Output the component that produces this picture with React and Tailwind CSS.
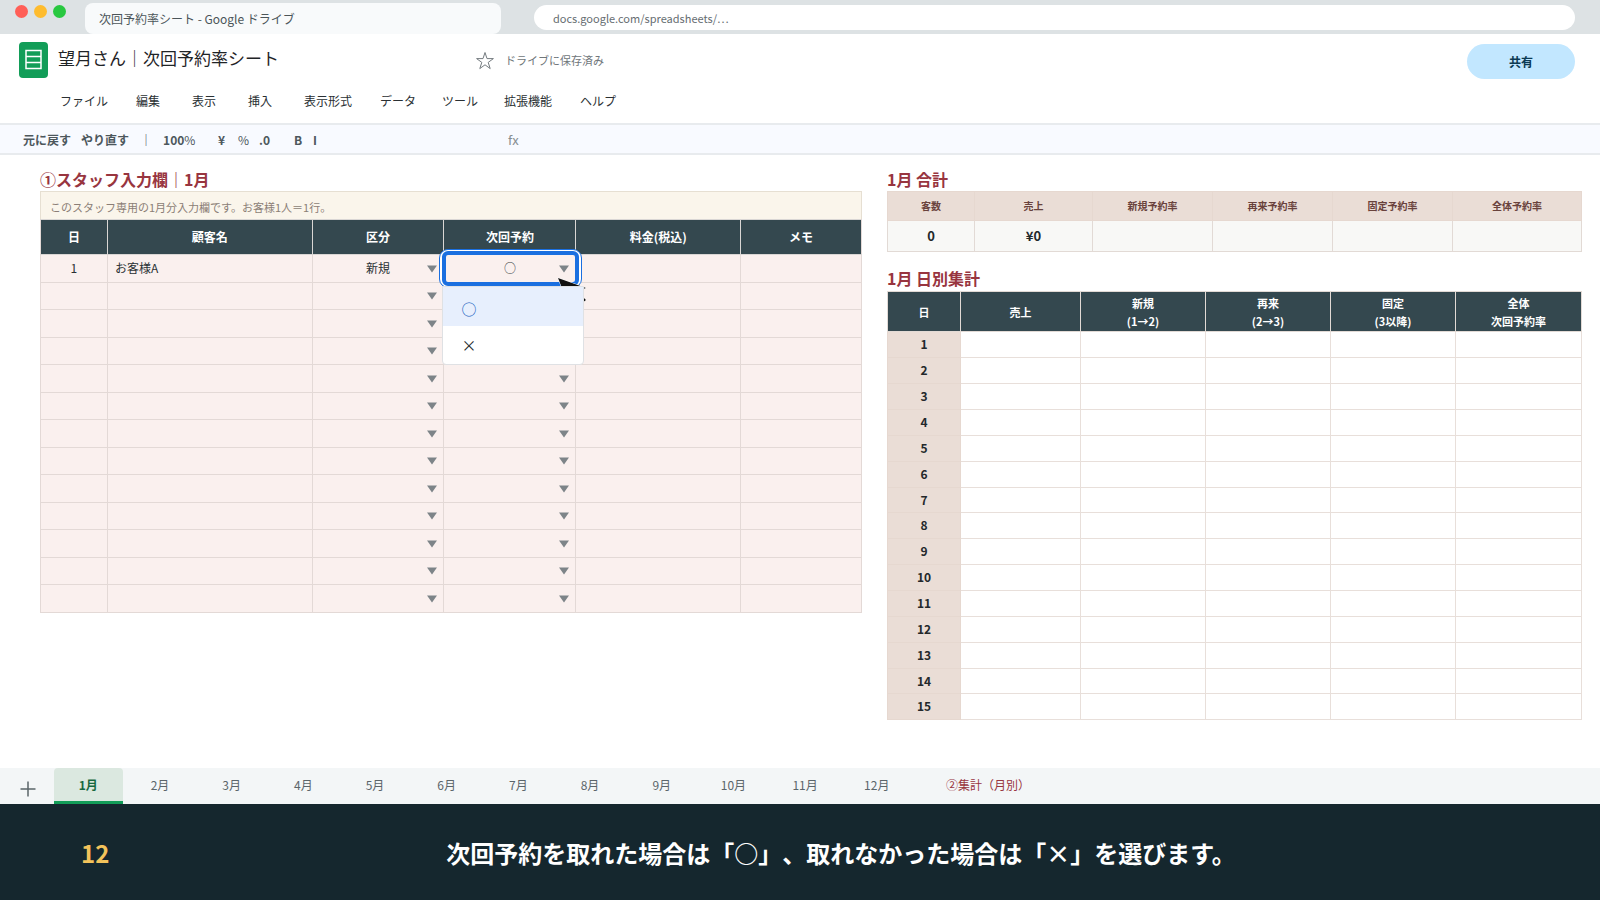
import React, { useState } from "react";

const menuItems = [
  { label: "ファイル", width: "w-[76px]" },
  { label: "編集", width: "w-14" },
  { label: "表示", width: "w-14" },
  { label: "挿入", width: "w-14" },
  { label: "表示形式", width: "w-[76px]" },
  { label: "データ", width: "w-[62px]" },
  { label: "ツール", width: "w-[62px]" },
  { label: "拡張機能", width: "w-[76px]" },
  { label: "ヘルプ", width: "w-14" },
];

const inputColumns = [
  { label: "日", size: 67 },
  { label: "顧客名", size: 205 },
  { label: "区分", size: 132 },
  { label: "次回予約", size: 132 },
  { label: "料金(税込)", size: 165 },
  { label: "メモ", size: 121 },
];

const totalColumns = [
  { label: "客数", value: "0", size: 87 },
  { label: "売上", value: "¥0", size: 118 },
  { label: "新規予約率", value: "", size: 120 },
  { label: "再来予約率", value: "", size: 120 },
  { label: "固定予約率", value: "", size: 120 },
  { label: "全体予約率", value: "", size: 129 },
];

const dailyColumns = [
  { label: "日", size: 73 },
  { label: "売上", size: 120 },
  { label: "新規", sub: "(1→2)", size: 125 },
  { label: "再来", sub: "(2→3)", size: 125 },
  { label: "固定", sub: "(3以降)", size: 125 },
  { label: "全体", sub: "次回予約率", size: 126 },
];

const inputRows = Array.from({ length: 13 }, (_, i) => i);
const days = Array.from({ length: 15 }, (_, i) => i + 1);
const months = Array.from({ length: 12 }, (_, i) => `${i + 1}月`);

function Columns({ columns }) {
  const total = columns.reduce((sum, column) => sum + column.size, 0);
  return (
    <colgroup>
      {columns.map((column) => (
        <col
          key={column.label}
          style={{ width: `${(column.size / total) * 100}%` }}
        />
      ))}
    </colgroup>
  );
}

function DropdownArrow({ label }) {
  return (
    <button
      type="button"
      aria-label={label}
      className="absolute inset-y-0 right-[6px] flex items-center"
    >
      <svg width="10" height="8" viewBox="0 0 10 8" fill="#7d8488">
        <path d="M0 0.5H10L5 7.5Z" />
      </svg>
    </button>
  );
}

function BrowserBar() {
  return (
    <div className="flex h-[34px] bg-[#dde2e4]">
      <div className="flex w-[85px] gap-[6px] pt-[5px] pl-[15px]">
        <span className="h-[13px] w-[13px] rounded-full bg-[#ff5f57]" />
        <span className="h-[13px] w-[13px] rounded-full bg-[#febc2e]" />
        <span className="h-[13px] w-[13px] rounded-full bg-[#28c840]" />
      </div>
      <div className="mt-[3px] flex w-[416px] items-center rounded-lg bg-[#f8fafb] px-[14px] text-xs text-[#4b5559]">
        次回予約率シート - Google ドライブ
      </div>
      <input
        type="text"
        aria-label="アドレス"
        defaultValue="docs.google.com/spreadsheets/…"
        className="mt-[5px] mr-[25px] ml-[33px] h-[25px] flex-1 rounded-full bg-white px-[19px] text-[11px] text-[#666d71]"
      />
    </div>
  );
}

function Header() {
  return (
    <header className="h-[89px]">
      <div className="flex h-[50px] items-start">
        <svg
          className="mt-2 ml-[19px]"
          width="29"
          height="36"
          viewBox="0 0 29 36"
          fill="none"
        >
          <rect width="29" height="36" rx="4" fill="#129d58" />
          <path
            d="M7 8.5H22V26.5H7ZM7 14.5H22M7 20.5H22"
            stroke="#fff"
            strokeWidth="1.5"
          />
        </svg>
        <h1 className="mt-[11px] ml-[10px] w-[417px] text-[17px] leading-[26px] text-[#1f2427]">
          望月さん｜次回予約率シート
        </h1>
        <button type="button" aria-label="スターを付ける" className="mt-[17px]">
          <svg
            width="20"
            height="20"
            viewBox="0 0 20 20"
            fill="none"
            stroke="#747b7f"
            strokeWidth="1"
          >
            <path d="M10 1.5L12 7.6H18.4L13.2 11.4L15.2 17.6L10 13.8L4.8 17.6L6.8 11.4L1.6 7.6H8Z" />
          </svg>
        </button>
        <span className="mt-[18px] ml-[10px] text-[11px] leading-4 text-[#6f767a]">
          ドライブに保存済み
        </span>
        <button
          type="button"
          className="mt-[10px] mr-[25px] ml-auto h-[35px] w-[108px] rounded-full bg-[#c2e7ff] text-xs font-bold text-[#0b3a53]"
        >
          共有
        </button>
      </div>
      <nav className="flex pt-[9px] pl-[60px] text-xs leading-4 text-[#2a3033]">
        {menuItems.map((item) => (
          <button
            key={item.label}
            type="button"
            className={`${item.width} text-left`}
          >
            {item.label}
          </button>
        ))}
      </nav>
    </header>
  );
}

function Toolbar() {
  return (
    <div className="flex h-8 items-center border-y-2 border-[#e8ebee] bg-[#f8faff] pt-[2px] pl-[23px] text-xs font-bold text-[#4d575c]">
      <button type="button">元に戻す</button>
      <button type="button" className="ml-[10px]">
        やり直す
      </button>
      <span className="mx-[11px]">｜</span>
      <button type="button" className="w-[55px] text-left">
        100<span className="font-normal">%</span>
      </button>
      <button type="button" className="w-5 text-left">
        ¥
      </button>
      <button type="button" className="w-[21px] text-left font-normal">
        %
      </button>
      <button type="button" className="w-[35px] text-left">
        .0
      </button>
      <button type="button" className="w-[19px] text-left">
        B
      </button>
      <button type="button" className="w-[195px] text-left">
        I
      </button>
      <span className="text-[13px] font-normal text-[#878e92]">fx</span>
    </div>
  );
}

function ReservationPicker({ value, onSelect }) {
  return (
    <>
      <div className="pointer-events-none absolute -top-[6px] -right-[7px] -bottom-[6px] -left-[5px] rounded-[9px] border border-[#1a6fe0] bg-white" />
      <div className="pointer-events-none absolute -top-[4px] -right-[4px] -bottom-[4px] -left-[2px] rounded-md border-4 border-[#1a6fe0] bg-[#faf0ee]" />
      <span className="relative text-[#363c3f]">{value}</span>
      <DropdownArrow label="次回予約を選択" />
      {/* Mouse pointer, partly under the open list */}
      <svg
        className="absolute top-[22px] left-[113px] z-10"
        width="32"
        height="30"
        viewBox="0 0 32 30"
        fill="#111"
        stroke="#fff"
        strokeWidth="1"
        paintOrder="stroke"
      >
        <path d="M1 1L29 11L20 14L29 23L25 26L16 17L11 26Z" />
      </svg>
      <div
        role="listbox"
        aria-label="次回予約"
        className="absolute top-[31px] -left-[2px] z-20 w-[142px] overflow-hidden rounded-b border border-[#dfe1e4] bg-white text-left text-[15px]"
      >
        <button
          type="button"
          role="option"
          aria-selected={value === "○"}
          onClick={() => onSelect("○")}
          className="block h-[39px] w-full bg-[#e7effd] pt-1 pl-[18px] text-left text-[#1a5fc0]"
        >
          ○
        </button>
        <button
          type="button"
          role="option"
          aria-selected={value === "×"}
          onClick={() => onSelect("×")}
          className="block h-[38px] w-full pl-[18px] text-left text-[#23282b]"
        >
          ×
        </button>
      </div>
    </>
  );
}

function StaffInput() {
  const [reservation, setReservation] = useState("○");

  return (
    <section>
      <h2 className="text-base leading-[23px] font-bold text-[#98353f]">
        ①スタッフ入力欄｜1月
      </h2>
      <p className="h-7 border border-b-0 border-[#e6dfd2] bg-[#faf5eb] pl-[9px] text-[11px] leading-[30px] text-[#8b7e76]">
        このスタッフ専用の1月分入力欄です。お客様1人＝1行。
      </p>
      <table className="w-full table-fixed border-collapse text-center text-xs text-[#2a3033]">
        <Columns columns={inputColumns} />
        <thead>
          <tr className="h-[35px] bg-[#34484f] text-white">
            {inputColumns.map((column) => (
              <th
                key={column.label}
                className="border border-[#d9d6d4] px-0 pt-0 pb-px font-bold first:border-l-[#e3d9d6] last:border-r-[#e3d9d6]"
              >
                {column.label}
              </th>
            ))}
          </tr>
        </thead>
        <tbody>
          {inputRows.map((row) => (
            <tr
              key={row}
              className="h-7 bg-[#faf0ee] even:h-[27px] [&>td]:border [&>td]:border-[#e3d9d6] [&>td]:px-0 [&>td]:pt-0 [&>td]:pb-[2px]"
            >
              <td>{row === 0 && "1"}</td>
              <td className="text-left">
                {row === 0 && <span className="pl-[7px]">お客様A</span>}
              </td>
              <td className="relative">
                {row === 0 && "新規"}
                <DropdownArrow label={`区分 ${row + 1}行目`} />
              </td>
              <td className="relative">
                {row === 0 ? (
                  <ReservationPicker
                    value={reservation}
                    onSelect={setReservation}
                  />
                ) : (
                  <DropdownArrow label={`次回予約 ${row + 1}行目`} />
                )}
              </td>
              <td />
              <td />
            </tr>
          ))}
        </tbody>
      </table>
    </section>
  );
}

function MonthSummary() {
  return (
    <section>
      <h2 className="text-base leading-[23px] font-bold text-[#98353f]">
        1月 合計
      </h2>
      <table className="w-full table-fixed border-collapse text-center">
        <Columns columns={totalColumns} />
        <thead>
          <tr className="h-[29px] bg-[#eaddd6] text-[10px] leading-4 text-[#69423c]">
            {totalColumns.map((column) => (
              <th
                key={column.label}
                className="border border-[#e6d8d0] px-0 pt-0 pb-px font-bold"
              >
                {column.label}
              </th>
            ))}
          </tr>
        </thead>
        <tbody>
          <tr className="h-[31px] bg-[#f8f8f6] text-[13px] font-bold text-[#23282b]">
            {totalColumns.map((column) => (
              <td
                key={column.label}
                className="border border-[#e2dad5] px-0 pt-0 pb-px"
              >
                {column.value}
              </td>
            ))}
          </tr>
        </tbody>
      </table>

      <h2 className="mt-[15px] pb-px text-base leading-[23px] font-bold text-[#98353f]">
        1月 日別集計
      </h2>
      <table className="w-full table-fixed border-collapse text-center text-xs text-[#23282b]">
        <Columns columns={dailyColumns} />
        <thead>
          <tr className="h-10 bg-[#34484f] text-[11px] text-white">
            {dailyColumns.map((column) => (
              <th
                key={column.label}
                className="border border-[#e2dad5] p-0 leading-[18px] font-bold"
              >
                {column.label}
                {column.sub && <span className="block">{column.sub}</span>}
              </th>
            ))}
          </tr>
        </thead>
        <tbody>
          {days.map((day) => (
            <tr key={day} className="h-[26px] nth-[7n]:h-[25px]">
              <th className="border border-[#e6d8d0] bg-[#eaddd6] px-0 pt-0 pb-px font-bold">
                {day}
              </th>
              {dailyColumns.slice(1).map((column) => (
                <td key={column.label} className="border border-[#e8dfda] p-0" />
              ))}
            </tr>
          ))}
        </tbody>
      </table>
    </section>
  );
}

function SheetTabs() {
  const [active, setActive] = useState("1月");

  return (
    <nav className="flex h-9 bg-[#f3f6f7] text-xs text-[#5b656a]">
      <button
        type="button"
        aria-label="シートを追加"
        className="flex w-[54px] items-center justify-center pt-[5px] pl-[2px]"
      >
        <svg width="16" height="16" viewBox="0 0 16 16" stroke="#5b656a" strokeWidth="1.5">
          <path d="M8 0.5V15.5M0.5 8H15.5" />
        </svg>
      </button>
      <div className="flex w-[857px] gap-[3px]">
        {months.map((month) => (
          <button
            key={month}
            type="button"
            onClick={() => setActive(month)}
            className={`flex-1 rounded-t border-b-[3px] ${
              active === month
                ? "border-[#129d58] bg-[#dbe8e0] font-bold text-[#17693f]"
                : "border-transparent"
            }`}
          >
            {month}
          </button>
        ))}
      </div>
      <button
        type="button"
        className="ml-[35px] border-b-[3px] border-transparent text-[#98353f]"
      >
        ②集計（月別）
      </button>
    </nav>
  );
}

export default function App() {
  return (
    <div className="flex min-h-screen flex-col bg-white font-['Noto_Sans_CJK_JP',sans-serif] [text-spacing-trim:space-all]">
      <BrowserBar />
      <Header />
      <Toolbar />
      <main className="grid flex-1 grid-cols-[822fr_695fr] items-start gap-[25px] pt-[13px] pr-[18px] pl-10">
        <StaffInput />
        <MonthSummary />
      </main>
      <SheetTabs />
      <footer className="flex h-24 items-center bg-[#15272e] pt-[2px] pr-20 text-2xl font-bold">
        <span className="w-[162px] pl-[81px] text-[#f3c35b]">12</span>
        <p className="flex-1 text-center text-white">
          次回予約を取れた場合は「○」、取れなかった場合は「×」を選びます。
        </p>
      </footer>
    </div>
  );
}
